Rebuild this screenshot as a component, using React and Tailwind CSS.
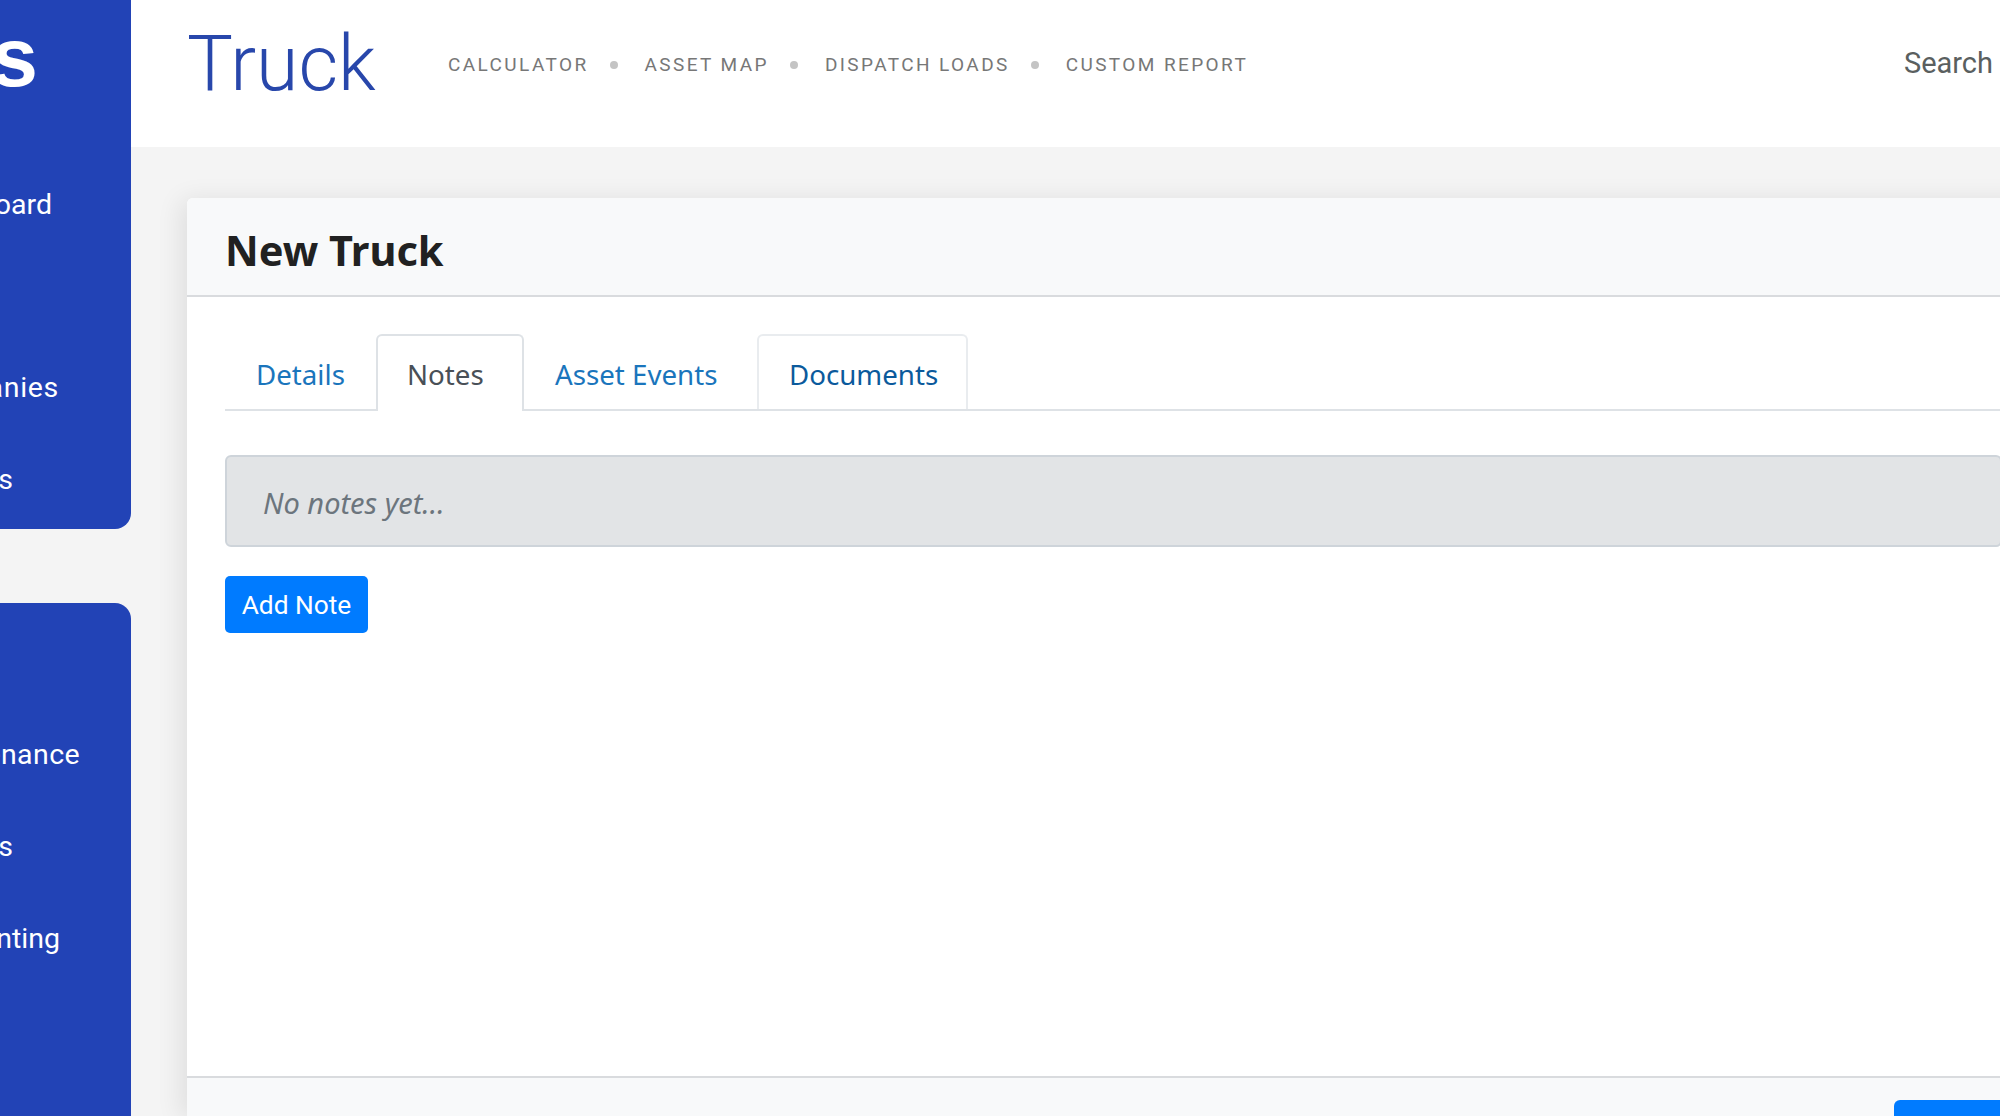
const roboto = "font-['Roboto',sans-serif]";

function NavItem({ children }) {
  return <span className="text-[19px] font-normal tracking-[2.4px] text-[#777] whitespace-nowrap">{children}</span>;
}
function Dot() {
  return <span className="w-[8px] h-[8px] rounded-full bg-[#c4c4c4] mx-[24px] -translate-x-[3px]" />;
}
function SideItem({ children, className = "" }) {
  return (
    <div className={`flex justify-end h-[92px] items-center whitespace-nowrap text-[28.5px] text-white ${className}`}>
      <span>{children}</span>
    </div>
  );
}

export default function App() {
  return (
    <div className={`w-[2000px] h-[1116px] flex overflow-hidden bg-[#f4f4f4] ${roboto}`}>
      <aside className="w-[131px] shrink-0 flex flex-col gap-[74px] overflow-hidden">
        <div className="h-[529px] bg-[#2243b6] rounded-br-[16px] overflow-hidden flex flex-col">
          <div className="flex justify-end pr-[93px] pt-[2px] h-[112px] items-center">
            <span className="font-['Liberation_Sans',sans-serif] font-bold text-[84px] leading-none text-white">s</span>
          </div>
          <div className="pr-[79px] mt-[47px]"><SideItem>Dashboard</SideItem></div>
          <div className="pr-[72px] mt-[91px]"><SideItem className="tracking-[0.7px]">Companies</SideItem></div>
          <div className="pr-[118px]"><SideItem>s</SideItem></div>
        </div>
        <div className="flex-1 bg-[#2243b6] rounded-tr-[16px] overflow-hidden flex flex-col pt-[106px]">
          <div className="pr-[51px]"><SideItem className="tracking-[0.4px]">Maintenance</SideItem></div>
          <div className="pr-[118px]"><SideItem>s</SideItem></div>
          <div className="pr-[71px]"><SideItem>Accounting</SideItem></div>
        </div>
      </aside>

      <main className="flex-1 min-w-0 flex flex-col">
        <header className="h-[147px] shrink-0 bg-white flex items-center pl-[56px]">
          <h1 className="text-[77px] font-light leading-none text-[#2847ab] w-[261px] mt-[-19px]">Truck</h1>
          <nav className="flex items-center mt-[-17px]">
            <NavItem>CALCULATOR</NavItem>
            <Dot />
            <NavItem>ASSET MAP</NavItem>
            <Dot />
            <NavItem>DISPATCH LOADS</NavItem>
            <Dot />
            <NavItem>CUSTOM REPORT</NavItem>
          </nav>
          <span className="ml-auto mr-[7px] text-[29px] text-[#5a5f5f] mt-[-20px]">Search</span>
        </header>

        <div className="flex-1 min-h-0 flex flex-col pl-[56px] pt-[51px] mr-[-40px]">
          <section className="flex-1 min-h-0 flex flex-col bg-white rounded-tl-[6px] shadow-[-6px_2px_26px_rgba(0,0,0,0.09)]">
            <div className="h-[99px] shrink-0 bg-[#f8f9fa] border-b-2 border-[#d9dbde] flex items-center pl-[38px] pt-[8px] rounded-tl-[6px]">
              <h2 className="font-['Noto_Sans',sans-serif] font-bold text-[41.5px] text-[#212121]">New Truck</h2>
            </div>

            <div className="flex-1 px-[38px] pt-[37px] font-['Noto_Sans',sans-serif]">
              <div className="flex h-[77px] border-b-2 border-[#dee2e6] text-[27.7px]">
                <div className="w-[151px] h-[77px] flex items-center pl-[31px] pt-[5px] text-[#1a75bc]">Details</div>
                <div className="w-[148px] h-[77px] bg-white border-2 border-b-0 border-[#dee2e6] rounded-t-[6px] flex items-center pl-[29px] pt-[3px] text-[#495057]">Notes</div>
                <div className="w-[233px] h-[75px] flex items-center pl-[31px] pt-[6px] text-[#1a75bc]">Asset Events</div>
                <div className="w-[211px] h-[75px] border-2 border-b-0 border-[#e9ecef] rounded-t-[6px] flex items-center pl-[30px] pt-[4px] text-[#0b5a9c]">Documents</div>
              </div>
              <div className="mt-[44px] h-[92px] bg-[#e2e4e6] border-2 border-[#ced4da] rounded-[6px] flex items-center pl-[36px] pt-[4px] italic text-[29px] text-[#6c757d]">
                No notes yet...
              </div>
              <button className={`mt-[29px] w-[143px] h-[57px] pt-[3px] bg-[#007bff] rounded-[5px] text-white text-[26.3px] ${roboto}`}>Add Note</button>
            </div>

            <div className="h-[40px] shrink-0 bg-[#f8f9fa] border-t-2 border-[#d9dbde] pt-[22px] pl-[1707px] overflow-hidden">
              <div className="w-[200px] h-[40px] bg-[#007bff] rounded-[6px]" />
            </div>
          </section>
        </div>
      </main>
    </div>
  );
}
